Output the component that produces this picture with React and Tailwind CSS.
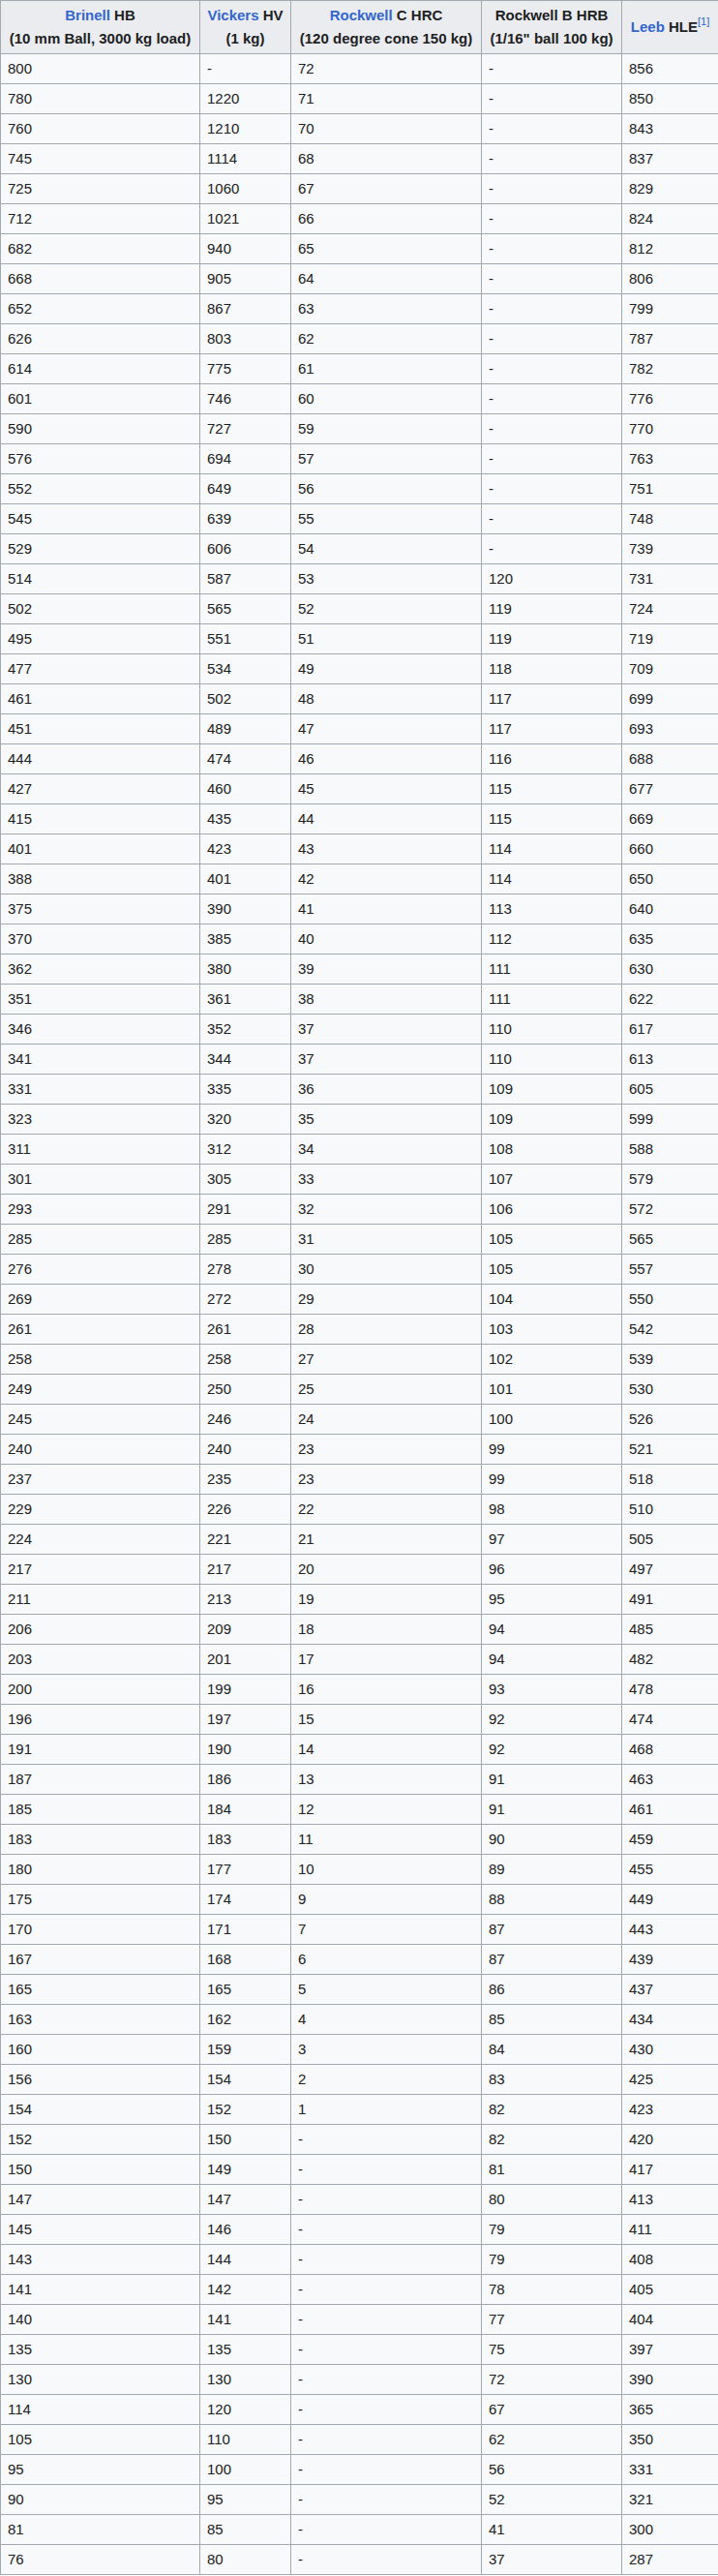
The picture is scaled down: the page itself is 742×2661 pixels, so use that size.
import React from "react";

const rows = [
  [800, "-", 72, "-", 856],
  [780, 1220, 71, "-", 850],
  [760, 1210, 70, "-", 843],
  [745, 1114, 68, "-", 837],
  [725, 1060, 67, "-", 829],
  [712, 1021, 66, "-", 824],
  [682, 940, 65, "-", 812],
  [668, 905, 64, "-", 806],
  [652, 867, 63, "-", 799],
  [626, 803, 62, "-", 787],
  [614, 775, 61, "-", 782],
  [601, 746, 60, "-", 776],
  [590, 727, 59, "-", 770],
  [576, 694, 57, "-", 763],
  [552, 649, 56, "-", 751],
  [545, 639, 55, "-", 748],
  [529, 606, 54, "-", 739],
  [514, 587, 53, 120, 731],
  [502, 565, 52, 119, 724],
  [495, 551, 51, 119, 719],
  [477, 534, 49, 118, 709],
  [461, 502, 48, 117, 699],
  [451, 489, 47, 117, 693],
  [444, 474, 46, 116, 688],
  [427, 460, 45, 115, 677],
  [415, 435, 44, 115, 669],
  [401, 423, 43, 114, 660],
  [388, 401, 42, 114, 650],
  [375, 390, 41, 113, 640],
  [370, 385, 40, 112, 635],
  [362, 380, 39, 111, 630],
  [351, 361, 38, 111, 622],
  [346, 352, 37, 110, 617],
  [341, 344, 37, 110, 613],
  [331, 335, 36, 109, 605],
  [323, 320, 35, 109, 599],
  [311, 312, 34, 108, 588],
  [301, 305, 33, 107, 579],
  [293, 291, 32, 106, 572],
  [285, 285, 31, 105, 565],
  [276, 278, 30, 105, 557],
  [269, 272, 29, 104, 550],
  [261, 261, 28, 103, 542],
  [258, 258, 27, 102, 539],
  [249, 250, 25, 101, 530],
  [245, 246, 24, 100, 526],
  [240, 240, 23, 99, 521],
  [237, 235, 23, 99, 518],
  [229, 226, 22, 98, 510],
  [224, 221, 21, 97, 505],
  [217, 217, 20, 96, 497],
  [211, 213, 19, 95, 491],
  [206, 209, 18, 94, 485],
  [203, 201, 17, 94, 482],
  [200, 199, 16, 93, 478],
  [196, 197, 15, 92, 474],
  [191, 190, 14, 92, 468],
  [187, 186, 13, 91, 463],
  [185, 184, 12, 91, 461],
  [183, 183, 11, 90, 459],
  [180, 177, 10, 89, 455],
  [175, 174, 9, 88, 449],
  [170, 171, 7, 87, 443],
  [167, 168, 6, 87, 439],
  [165, 165, 5, 86, 437],
  [163, 162, 4, 85, 434],
  [160, 159, 3, 84, 430],
  [156, 154, 2, 83, 425],
  [154, 152, 1, 82, 423],
  [152, 150, "-", 82, 420],
  [150, 149, "-", 81, 417],
  [147, 147, "-", 80, 413],
  [145, 146, "-", 79, 411],
  [143, 144, "-", 79, 408],
  [141, 142, "-", 78, 405],
  [140, 141, "-", 77, 404],
  [135, 135, "-", 75, 397],
  [130, 130, "-", 72, 390],
  [114, 120, "-", 67, 365],
  [105, 110, "-", 62, 350],
  [95, 100, "-", 56, 331],
  [90, 95, "-", 52, 321],
  [81, 85, "-", 41, 300],
  [76, 80, "-", 37, 287],
];

function Link({ children }) {
  return <a className="text-[#3366cc] no-underline">{children}</a>;
}

export default function App() {
  const th = "border border-[#a2a9b1] bg-[#eaecf0] px-[7px] py-[3px] text-center font-bold";
  const td = "border border-[#a2a9b1] px-[7px] py-[3px] text-left";

  return (
    <div className="w-[742px] bg-white font-['Liberation_Sans',Arial,sans-serif] text-[15px] leading-[24px] text-[#202122]">
      <table className="w-[742px] table-fixed border-collapse bg-[#f8f9fa]">
        <colgroup>
          <col className="w-[206px]" />
          <col className="w-[94px]" />
          <col className="w-[197px]" />
          <col className="w-[145px]" />
          <col className="w-[100px]" />
        </colgroup>
        <thead>
          <tr>
            <th className={th}>
              <Link>Brinell</Link> HB
              <br />
              (10 mm Ball, 3000 kg load)
            </th>
            <th className={th}>
              <Link>Vickers</Link> HV
              <br />
              (1 kg)
            </th>
            <th className={th}>
              <Link>Rockwell</Link> C HRC
              <br />
              (120 degree cone 150 kg)
            </th>
            <th className={th}>
              Rockwell B HRB
              <br />
              (1/16" ball 100 kg)
            </th>
            <th className={th}>
              <Link>Leeb</Link> HLE
              <sup className="relative -top-[1px] align-super text-[11px] font-normal leading-none text-[#3366cc]">[1]</sup>
            </th>
          </tr>
        </thead>
        <tbody>
          {rows.map((r) => (
            <tr key={r[0]}>
              {r.map((v, i) => (
                <td key={i} className={td}>
                  {v}
                </td>
              ))}
            </tr>
          ))}
        </tbody>
      </table>
    </div>
  );
}
